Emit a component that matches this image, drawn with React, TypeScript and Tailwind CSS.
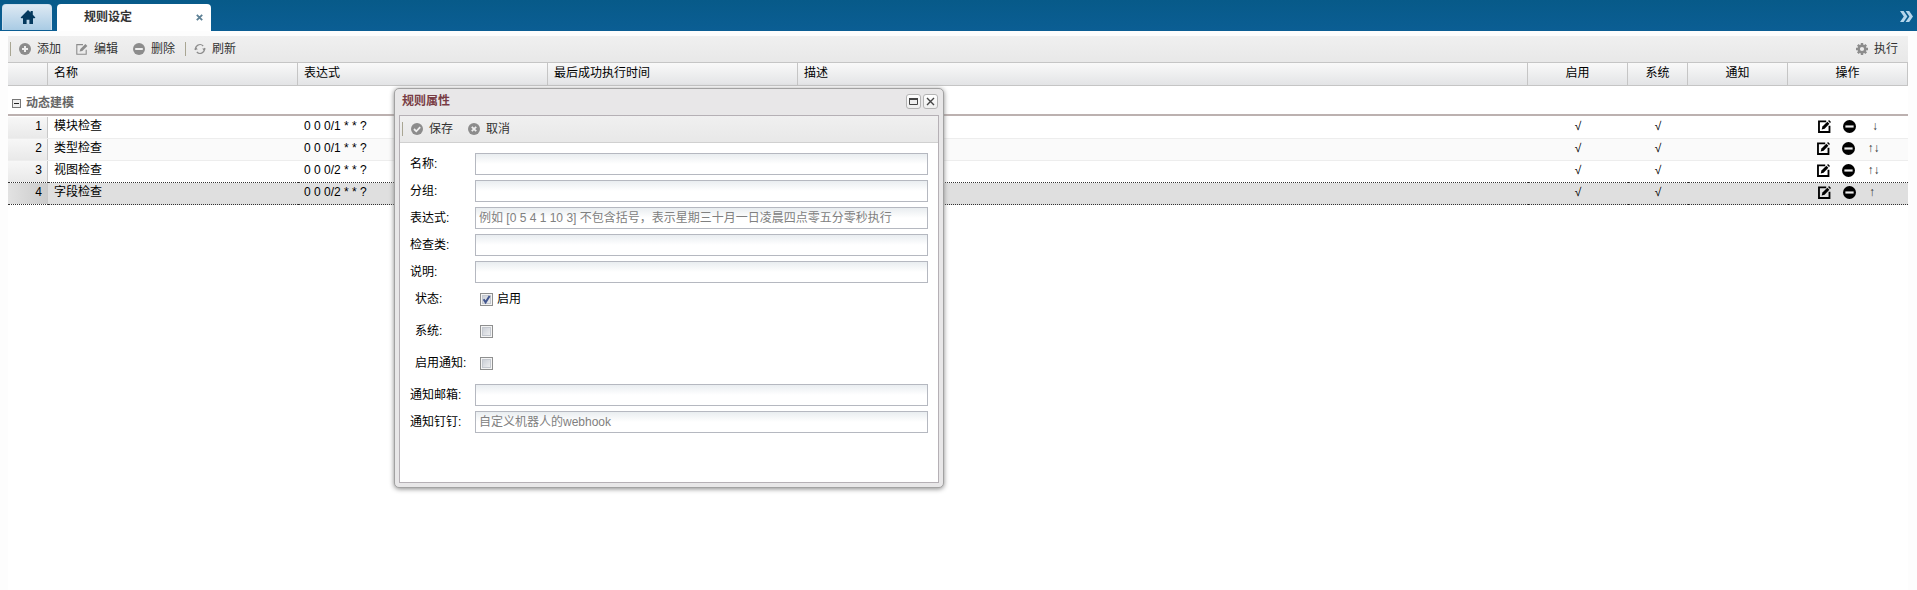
import React, { useState } from 'react';

type IconProps = { className?: string };

const HomeIcon = () => (
  <svg viewBox="0 0 16 16" className="h-4 w-4" fill="#04395e" aria-hidden="true">
    <path d="M8 1 L0.6 8.4 L1.4 9.2 H3 V15 H6.6 V10.8 H9.4 V15 H13 V9.2 H14.6 L15.4 8.4 L12.8 5.8 V2 H10.6 V3.6 Z" />
  </svg>
);

const PlusIcon = ({ className }: IconProps) => (
  <svg viewBox="0 0 12 12" className={className} aria-hidden="true">
    <circle cx="6" cy="6" r="6" fill="currentColor" />
    <path d="M6 3V9M3 6H9" stroke="#eee" strokeWidth="2" />
  </svg>
);

const MinusIcon = ({ className }: IconProps) => (
  <svg viewBox="0 0 12 12" className={className} aria-hidden="true">
    <circle cx="6" cy="6" r="6" fill="currentColor" />
    <path d="M2.2 6H9.8" stroke="#eee" strokeWidth="2" />
  </svg>
);

const CheckIcon = ({ className }: IconProps) => (
  <svg viewBox="0 0 12 12" className={className} aria-hidden="true">
    <circle cx="6" cy="6" r="6" fill="currentColor" />
    <path d="M3 6L5.3 8.3L9.2 4.2" stroke="#eee" strokeWidth="1.8" fill="none" />
  </svg>
);

const CrossIcon = ({ className }: IconProps) => (
  <svg viewBox="0 0 12 12" className={className} aria-hidden="true">
    <circle cx="6" cy="6" r="6" fill="currentColor" />
    <path d="M3.8 3.8L8.2 8.2M8.2 3.8L3.8 8.2" stroke="#eee" strokeWidth="1.8" />
  </svg>
);

const EditIcon = ({ className }: IconProps) => (
  <svg viewBox="0 0 12 12" className={className} aria-hidden="true">
    <path d="M7 1.6H0.8V11.2H10.2V6.8" stroke="currentColor" strokeWidth="1.1" fill="none" />
    <path d="M3.6 8.6L4.4 5.9L9.4 0.9L11.4 2.9L6.3 7.9Z" fill="currentColor" />
  </svg>
);

const RowEditIcon = ({ className }: IconProps) => (
  <svg viewBox="0 0 12 12" className={className} aria-hidden="true">
    <path d="M7.6 1.2H0.9V11.1H10.6V5.4" stroke="currentColor" strokeWidth="1.7" fill="none" />
    <path d="M3.4 8.7L4.1 6L8.6 1.6L10.5 3.5L6.1 8Z" fill="currentColor" />
    <path d="M9.3 0.9L10.2 0L12 1.8L11.1 2.7Z" fill="currentColor" />
  </svg>
);

const RefreshIcon = ({ className }: IconProps) => (
  <svg viewBox="0 0 12 12" className={className} aria-hidden="true">
    <path
      d="M1.7 7A4.4 4.4 0 0 1 9.2 3M10.3 5A4.4 4.4 0 0 1 2.8 9"
      stroke="currentColor"
      strokeWidth="1.2"
      fill="none"
    />
    <path d="M0 6.4L1.8 4L3.8 6.4ZM12 5.6L10.2 8L8.2 5.6Z" fill="currentColor" />
  </svg>
);

const GearIcon = ({ className }: IconProps) => (
  <svg viewBox="0 0 12 12" className={className} aria-hidden="true">
    <circle cx="6" cy="6" r="3.3" stroke="currentColor" strokeWidth="2.4" fill="none" />
    <path
      d="M6 0V2.4M6 9.6V12M0 6H2.4M9.6 6H12M1.8 1.8L3.4 3.4M8.6 8.6L10.2 10.2M10.2 1.8L8.6 3.4M3.4 8.6L1.8 10.2"
      stroke="currentColor"
      strokeWidth="2.4"
    />
  </svg>
);

const Separator = () => <span className="h-3.5 w-px bg-[#a9a693]" />;

function ToolButton({ icon, label }: { icon: React.ReactNode; label: string }) {
  return (
    <button type="button" className="flex items-center gap-1.5 whitespace-nowrap text-[#333]">
      <span className="text-[#8c8c8c]">{icon}</span>
      {label}
    </button>
  );
}

const rows = [
  { name: '模块检查', expression: '0 0 0/1 * * ?', move: '↓', space: 'pl-[3px]' },
  { name: '类型检查', expression: '0 0 0/1 * * ?', move: '↑↓', space: '' },
  { name: '视图检查', expression: '0 0 0/2 * * ?', move: '↑↓', space: '' },
  { name: '字段检查', expression: '0 0 0/2 * * ?', move: '↑', space: 'pr-[3px]' },
];

const headings = [
  { text: '', width: 'w-[40px]', align: 'text-left' },
  { text: '名称', width: 'w-[250px]', align: 'text-left' },
  { text: '表达式', width: 'w-[250px]', align: 'text-left' },
  { text: '最后成功执行时间', width: 'w-[250px]', align: 'text-left' },
  { text: '描述', width: '', align: 'text-left' },
  { text: '启用', width: 'w-[100px]', align: 'text-center' },
  { text: '系统', width: 'w-[60px]', align: 'text-center' },
  { text: '通知', width: 'w-[100px]', align: 'text-center' },
  { text: '操作', width: 'w-[120px]', align: 'text-center' },
];

function RuleTable() {
  const selected = 3;
  return (
    <table className="w-full table-fixed border-separate border-spacing-0">
      <thead>
        <tr className="h-6">
          {headings.map((h, i) => (
            <th
              key={i}
              className={`${h.width} ${h.align} border-y border-r border-[#c5c5c5] bg-linear-to-b from-[#f9f9f9] to-[#e3e4e6] px-1.5 pt-0 pb-0.5 leading-4 font-normal text-black`}
            >
              {h.text}
            </th>
          ))}
        </tr>
      </thead>
      <tbody>
        <tr>
          <td colSpan={9} className="h-[31px] border-b border-white p-0">
            <div className="flex h-[30px] items-center gap-[5px] border-b-2 border-[#bcb1b0] pt-1.5 pl-1 font-bold text-[#666]">
              <button type="button" aria-label="折叠" className="flex">
                <svg viewBox="0 0 9 9" className="h-[9px] w-[9px]" aria-hidden="true">
                  <rect x="0.5" y="0.5" width="8" height="8" fill="#eee" stroke="#777" />
                  <path d="M2 4.5H7" stroke="#222" />
                </svg>
              </button>
              动态建模
            </div>
          </td>
        </tr>
        {rows.map((row, i) => {
          const isSelected = i === selected;
          const line =
            i >= selected - 1 ? 'border-b border-dotted border-b-[#333]' : 'border-b border-b-[#ededed]';
          const fill = isSelected ? 'bg-[#dfdfdf]' : i % 2 ? 'bg-[#fafafa]' : 'bg-white';
          const cell = `${line} ${fill} h-[22px] px-1.5 pt-0 pb-[3px] leading-4`;
          const numberFill = isSelected
            ? 'bg-linear-to-r from-[#e2e2e2] to-[#cbcbcb]'
            : 'bg-linear-to-b from-[#f7f7f7] to-[#e9e9e9]';
          return (
            <tr key={row.name}>
              <td className={`${line} h-[22px] p-0`}>
                <div className={`h-[21px] border-r border-[#c8c8c8] pr-[5px] text-right leading-[18px] ${numberFill}`}>
                  {i + 1}
                </div>
              </td>
              <td className={cell}>{row.name}</td>
              <td className={cell}>{row.expression}</td>
              <td className={cell} />
              <td className={cell} />
              <td className={`${cell} text-center`}>√</td>
              <td className={`${cell} text-center`}>√</td>
              <td className={cell} />
              <td className={`${line} ${fill} h-[22px] p-0`}>
                <div className="flex h-[21px] items-center justify-center pb-[3px]">
                  <button type="button" aria-label="编辑" className="mr-3 text-black">
                    <RowEditIcon className="h-[13px] w-[13px]" />
                  </button>
                  <button type="button" aria-label="删除" className="mr-[13px] text-black">
                    <MinusIcon className="h-[13px] w-[13px]" />
                  </button>
                  <button type="button" className={`text-[#333] ${row.space}`}>
                    {row.move}
                  </button>
                </div>
              </td>
            </tr>
          );
        })}
      </tbody>
    </table>
  );
}

function TextRow({ id, label, placeholder }: { id: string; label: string; placeholder?: string }) {
  return (
    <div className="mb-[5px] flex h-[22px]">
      <label htmlFor={id} className="w-[65px] shrink-0 leading-[22px]">
        {label}:
      </label>
      <input
        id={id}
        type="text"
        placeholder={placeholder}
        className="min-w-0 flex-1 border border-[#b5b8c0] bg-white bg-linear-to-b from-[#e9edf0] to-white to-50% px-[3px] text-black outline-none placeholder:text-[#808080]"
      />
    </div>
  );
}

function CheckRow({ id, label, text, initial }: { id: string; label: string; text?: string; initial?: boolean }) {
  const [checked, setChecked] = useState(Boolean(initial));
  return (
    <div className="mb-2.5 flex h-[22px] pl-[5px]">
      <label htmlFor={id} className="w-[65px] shrink-0 leading-[22px]">
        {label}:
      </label>
      <span className="relative mt-[5px] h-[13px] w-[13px]">
        <input
          id={id}
          type="checkbox"
          checked={checked}
          onChange={(e) => setChecked(e.target.checked)}
          className="block h-[13px] w-[13px] appearance-none border border-[#8e8f8f] bg-linear-to-br from-[#c2c7d0] to-[#f6f6f6] shadow-[inset_0_0_0_1px_#f4f4f4,inset_0_0_0_2px_#c4c8cf]"
        />
        {checked && (
          <svg viewBox="0 0 13 13" className="pointer-events-none absolute inset-0 h-[13px] w-[13px]" aria-hidden="true">
            <path d="M3.6 6.2L5.6 9.4L9.6 3" stroke="#42568f" strokeWidth="2" fill="none" />
          </svg>
        )}
      </span>
      {text && (
        <label htmlFor={id} className="pl-1 leading-[22px]">
          {text}
        </label>
      )}
    </div>
  );
}

const windowButton =
  'flex h-[15px] w-[15px] items-center justify-center rounded-[3px] border border-[#b4b4b4] bg-linear-to-b from-white to-[#eee]';

function RuleDialog() {
  return (
    <section
      role="dialog"
      aria-labelledby="dialog-title"
      className="absolute top-[88px] left-[394px] flex h-[400px] w-[550px] flex-col rounded-[5px] border border-[#a2a2a2] bg-[#e8e7e8] px-1 pb-1 shadow-[0_1px_5px_#888]"
    >
      <header className="flex h-[26px] shrink-0 items-center gap-0.5 pr-px pb-px pl-[3px]">
        <h2 id="dialog-title" className="mb-px flex-1 font-bold text-[#793d45]">
          规则属性
        </h2>
        <button type="button" aria-label="最大化" className={windowButton}>
          <svg viewBox="0 0 9 7" className="h-[7px] w-[9px]" aria-hidden="true">
            <path d="M0.5 1V6.5H8.5V1" stroke="#444" fill="#eee" />
            <path d="M0 1H9" stroke="#444" strokeWidth="2" />
          </svg>
        </button>
        <button type="button" aria-label="关闭" className={windowButton}>
          <svg viewBox="0 0 9 9" className="h-[9px] w-[9px]" aria-hidden="true">
            <path d="M1 1L8 8M8 1L1 8" stroke="#444" strokeWidth="1.4" />
          </svg>
        </button>
      </header>
      <div className="flex-1 border border-[#b5b0b5] bg-white">
        <div className="flex h-[27px] items-center border-b border-[#d0d0d0] bg-linear-to-b from-[#f0f0f0] to-[#e8e8e8] pl-0.5">
          <Separator />
          <div className="flex gap-[15px] pl-2">
            <ToolButton icon={<CheckIcon className="h-3 w-3" />} label="保存" />
            <ToolButton icon={<CrossIcon className="h-3 w-3" />} label="取消" />
          </div>
        </div>
        <form className="px-2.5 pt-2.5" onSubmit={(e) => e.preventDefault()}>
          <TextRow id="name" label="名称" />
          <TextRow id="group" label="分组" />
          <TextRow
            id="expression"
            label="表达式"
            placeholder="例如 [0 5 4 1 10 3] 不包含括号，表示星期三十月一日凌晨四点零五分零秒执行"
          />
          <TextRow id="check-class" label="检查类" />
          <TextRow id="note" label="说明" />
          <CheckRow id="enabled" label="状态" text="启用" initial />
          <CheckRow id="system" label="系统" />
          <CheckRow id="notify" label="启用通知" />
          <TextRow id="mail" label="通知邮箱" />
          <TextRow id="ding" label="通知钉钉" placeholder="自定义机器人的webhook" />
        </form>
      </div>
    </section>
  );
}

export default function App() {
  return (
    <div className="relative flex min-h-screen flex-col bg-[#fdfdfd] font-['Liberation_Sans','Noto_Sans_CJK_SC',sans-serif] text-[12px] leading-4 text-black">
      <nav className="flex h-[31px] items-end bg-linear-to-b from-[#075a89] to-[#0b5e94] pl-0.5">
        <a
          href="#home"
          aria-label="首页"
          className="mr-[5px] mb-px flex h-[26px] w-[50px] items-center justify-center rounded-t-[4px] border border-b-0 border-[#cfe0ee] bg-linear-to-b from-[#dde9f3] to-[#a9cbe4] pb-px pl-px"
        >
          <HomeIcon />
        </a>
        <div className="flex h-[27px] w-[154px] items-center rounded-t-[4px] bg-white pr-2 pb-0.5">
          <a href="#rules" className="flex-1 pl-[27px] font-bold text-[#333]">
            规则设定
          </a>
          <button type="button" aria-label="关闭标签" className="mt-0.5">
            <svg viewBox="0 0 7 7" className="h-[7px] w-[7px]" aria-hidden="true">
              <path d="M0.8 0.8L6.2 6.2M6.2 0.8L0.8 6.2" stroke="#5d8095" strokeWidth="1.8" />
            </svg>
          </button>
        </div>
        <button type="button" aria-label="更多" className="mr-1 mb-[9px] ml-auto">
          <svg viewBox="0 0 13 11" className="h-[11px] w-[13px]" aria-hidden="true">
            <path d="M0 0H3.6L7.4 5.5L3.6 11H0L3.8 5.5ZM5.6 0H9.2L13 5.5L9.2 11H5.6L9.4 5.5Z" fill="#b5d6ec" />
          </svg>
        </button>
      </nav>
      <main className="mt-[5px] mr-[9px] ml-2 flex-1 bg-white">
        <div className="flex h-[26px] items-center bg-linear-to-b from-[#f0f0f0] to-[#e8e8e8] pr-2.5 pl-0.5">
          <Separator />
          <div className="flex gap-[15px] pr-2.5 pl-2">
            <ToolButton icon={<PlusIcon className="h-3 w-3" />} label="添加" />
            <ToolButton icon={<EditIcon className="h-3 w-3" />} label="编辑" />
            <ToolButton icon={<MinusIcon className="h-3 w-3" />} label="删除" />
          </div>
          <Separator />
          <div className="flex flex-1 justify-between pl-2">
            <ToolButton icon={<RefreshIcon className="h-3 w-3" />} label="刷新" />
            <ToolButton icon={<GearIcon className="h-3 w-3" />} label="执行" />
          </div>
        </div>
        <RuleTable />
      </main>
      <RuleDialog />
    </div>
  );
}
